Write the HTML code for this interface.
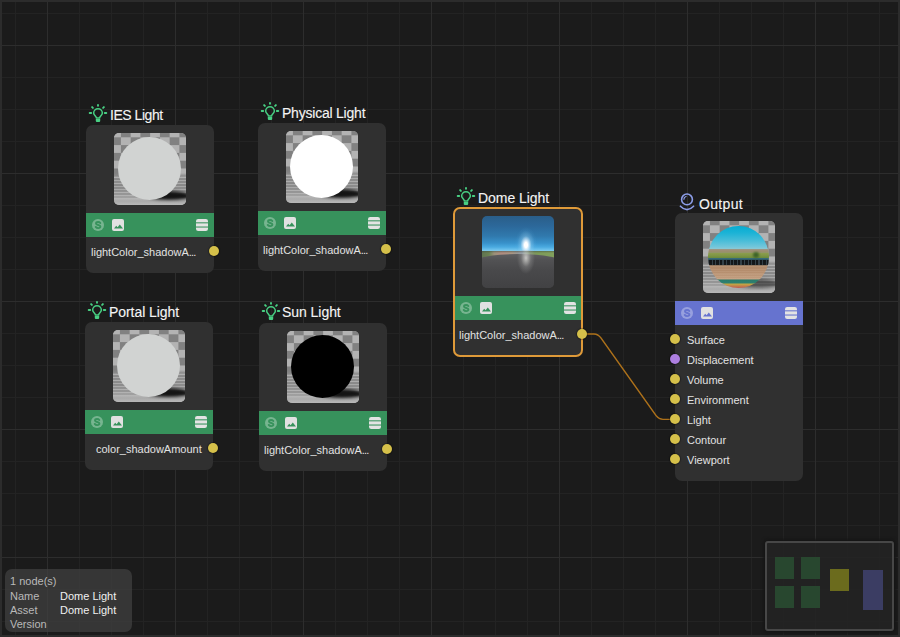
<!DOCTYPE html>
<html><head><meta charset="utf-8">
<style>
*{margin:0;padding:0;box-sizing:border-box}
html,body{width:900px;height:637px;overflow:hidden;background:#1b1b1b}
body{font-family:"Liberation Sans",sans-serif;position:relative}
#cv{position:absolute;left:0;top:0;width:900px;height:637px;
 background-color:#1b1b1b;
 background-image:
  linear-gradient(to right,#2d2d2d 1px,transparent 1px),
  linear-gradient(to bottom,#2d2d2d 1px,transparent 1px),
  linear-gradient(to right,#232323 1px,transparent 1px),
  linear-gradient(to bottom,#232323 1px,transparent 1px);
 background-size:128px 128px,128px 128px,32px 32px,32px 32px;
 background-position:47px 0,0 45px,15px 0,0 13px;
}
#frame{position:absolute;left:0;top:0;width:900px;height:637px;border:2px solid #2c2c2c}
.node{position:absolute;width:128px;height:148px;background:#303030;border-radius:7px}
.thumb{position:absolute;left:28px;top:8px;width:72px;height:72px;border-radius:5px;overflow:hidden;background:#a0a0a0}
.chk{position:absolute;left:0;top:0;width:72px;height:72px;
 background:conic-gradient(#818181 0 25%,#b3b3b3 0 50%,#818181 0 75%,#b3b3b3 0);
 background-size:19.5px 15.6px;background-position:-2.85px -3.5px;filter:blur(0.3px)}
.floor{position:absolute;left:0;top:40px;width:72px;height:32px;
 background:linear-gradient(to bottom,rgba(0,0,0,0) 0,#8a8a8a 3px,#b0b0b0 4.5px,#7c7c7c 6px,#aaaaaa 7.5px,#7e7e7e 9px,#adadad 10.5px,#7a7a7a 12px,#a8a8a8 13.5px,#7e7e7e 15px,#aaaaaa 16.5px,#848484 18px,#b0b0b0 19.5px,#888 21px,#b2b2b2 22.5px,#959595 24px,#b5b5b5 25.5px,#aaa 28px,#b8b8b8 32px)}
.sph{position:absolute;left:4.3px;top:4px;width:63px;height:63px;border-radius:50%}
.shadow{position:absolute;left:34px;top:58px;width:42px;height:9px;border-radius:50% 50% 50% 50%/60% 60% 40% 40%;background:#141414;filter:blur(1.4px)}
.bar{position:absolute;left:0;top:88px;width:128px;height:24px}
.green{background:#37925c}
.blue{background:#6673cf}
.sicon{position:absolute;left:6px;top:6px;width:12px;height:12px}
.iicon{position:absolute;left:26px;top:6px;width:12px;height:12px}
.hicon{position:absolute;right:6px;top:6px;width:12px;height:12px}
.lbl{position:absolute;font-size:11px;color:#e2e2e2;white-space:nowrap;line-height:1}
.dot{position:absolute;width:10px;height:10px;border-radius:50%;background:#d5c04a;box-shadow:0 0 1px 1px rgba(0,0,0,0.3)}
.title{position:absolute;font-size:14px;color:#f4f4f4;-webkit-text-stroke:0.12px #f4f4f4;white-space:nowrap;line-height:1}
.bulb{position:absolute;width:22px;height:22px}
.info{position:absolute;left:5px;top:569px;width:127px;height:63px;border-radius:7px;background:rgba(66,66,66,0.7)}
.info div{position:absolute;font-size:11px;line-height:1;white-space:nowrap}
.mini{position:absolute;left:765px;top:541px;width:129px;height:90px;border:2px solid #474747;border-radius:3px;background:rgba(36,36,36,0.9);box-shadow:0 0 3px 2px #161616}
.mini div{position:absolute}
</style></head>
<body>
<div id="cv"></div>
<div id="frame"></div>

<svg width="0" height="0" style="position:absolute">
 <defs>
  <g id="bulbg" fill="none" stroke="#48d083" stroke-linecap="round">
   <path d="M12 1.9V2.8M6.1 4.1L6.9 4.9M17.9 4.1L17.1 4.9M3.7 10H5.2M20.3 10H18.8" stroke-width="1.9"/>
   <path d="M10.4 15L10.2 14.3C9.6 12.9 7.65 12.1 7.65 10.1A4.35 4.35 0 0 1 16.35 10.1C16.35 12.1 14.4 12.9 13.8 14.3L13.6 15Z" stroke-width="1.5" stroke-linejoin="round"/>
   <path d="M9.8 16.1H14.2V17.9Q14.2 19 13.1 19H10.9Q9.8 19 9.8 17.9Z" fill="#48d083" stroke="none"/>
  </g>
  <g id="sic">
   <path d="M6 0L8.3 .45 10.25 1.75 11.55 3.7 12 6 11.55 8.3 10.25 10.25 8.3 11.55 6 12 3.7 11.55 1.75 10.25 .45 8.3 0 6 .45 3.7 1.75 1.75 3.7 .45Z" fill="rgba(255,255,255,0.32)"/>
   <path d="M8.3 4C7.8 3.3 7 3 6 3C4.8 3 4 3.6 4 4.5C4 6.7 8.4 5.4 8.4 7.6C8.4 8.5 7.5 9.1 6.2 9.1C5.1 9.1 4.3 8.7 3.7 7.9" fill="none" stroke="currentColor" stroke-width="1.9" stroke-linecap="round"/>
  </g>
  <g id="iic">
   <rect x="0" y="0" width="12" height="12" rx="2" fill="#e1e1e1"/>
   <path d="M2 9.6L4.2 6.8 5.6 8.2 7.8 5.6 11 9.6z" fill="currentColor"/>
  </g>
  <g id="hic">
   <rect x="0" y="0" width="12" height="12" rx="2.2" fill="#e3e3e3"/>
   <rect x="0" y="3" width="12" height="1.5" fill="currentColor" opacity="0.7"/>
   <rect x="0" y="7.3" width="12" height="1.5" fill="currentColor" opacity="0.7"/>
  </g>
 </defs>
</svg>

<!-- IES Light -->
<svg class="bulb" style="left:86px;top:103px" viewBox="0 0 22 22"><use href="#bulbg"/></svg>
<div class="title" style="left:110px;top:108px;letter-spacing:-0.46px">IES Light</div>
<div class="node" style="left:86px;top:125px">
 <div class="thumb"><div class="chk"></div><div class="floor"></div><div class="shadow"></div><div class="sph" style="background:#d1d3d2"></div></div>
 <div class="bar green" style="color:#37925c">
  <svg class="sicon" viewBox="0 0 12 12"><use href="#sic"/></svg>
  <svg class="iicon" viewBox="0 0 12 12"><use href="#iic"/></svg>
  <svg class="hicon" viewBox="0 0 12 12"><use href="#hic"/></svg>
 </div>
 <div class="lbl" style="left:5px;top:122px">lightColor_shadowA<span style="letter-spacing:-0.9px">...</span></div>
 <div class="dot" style="left:123px;top:121px"></div>
</div>

<!-- Physical Light -->
<svg class="bulb" style="left:258px;top:101px" viewBox="0 0 22 22"><use href="#bulbg"/></svg>
<div class="title" style="left:282px;top:106px;letter-spacing:-0.22px">Physical Light</div>
<div class="node" style="left:258px;top:123px">
 <div class="thumb"><div class="chk"></div><div class="floor"></div><div class="shadow"></div><div class="sph" style="background:#ffffff"></div></div>
 <div class="bar green" style="color:#37925c">
  <svg class="sicon" viewBox="0 0 12 12"><use href="#sic"/></svg>
  <svg class="iicon" viewBox="0 0 12 12"><use href="#iic"/></svg>
  <svg class="hicon" viewBox="0 0 12 12"><use href="#hic"/></svg>
 </div>
 <div class="lbl" style="left:5px;top:122px">lightColor_shadowA<span style="letter-spacing:-0.9px">...</span></div>
 <div class="dot" style="left:123px;top:121px"></div>
</div>

<!-- Portal Light -->
<svg class="bulb" style="left:85px;top:300px" viewBox="0 0 22 22"><use href="#bulbg"/></svg>
<div class="title" style="left:109px;top:305px;letter-spacing:-0.06px">Portal Light</div>
<div class="node" style="left:85px;top:322px">
 <div class="thumb"><div class="chk"></div><div class="floor"></div><div class="shadow"></div><div class="sph" style="background:#d1d3d2"></div></div>
 <div class="bar green" style="color:#37925c">
  <svg class="sicon" viewBox="0 0 12 12"><use href="#sic"/></svg>
  <svg class="iicon" viewBox="0 0 12 12"><use href="#iic"/></svg>
  <svg class="hicon" viewBox="0 0 12 12"><use href="#hic"/></svg>
 </div>
 <div class="lbl" style="left:11px;top:122px">color_shadowAmount</div>
 <div class="dot" style="left:123px;top:121px"></div>
</div>

<!-- Sun Light -->
<svg class="bulb" style="left:259px;top:301px" viewBox="0 0 22 22"><use href="#bulbg"/></svg>
<div class="title" style="left:282px;top:305px;letter-spacing:-0.05px">Sun Light</div>
<div class="node" style="left:259px;top:323px">
 <div class="thumb"><div class="chk"></div><div class="floor"></div><div class="shadow"></div><div class="sph" style="background:#000"></div></div>
 <div class="bar green" style="color:#37925c">
  <svg class="sicon" viewBox="0 0 12 12"><use href="#sic"/></svg>
  <svg class="iicon" viewBox="0 0 12 12"><use href="#iic"/></svg>
  <svg class="hicon" viewBox="0 0 12 12"><use href="#hic"/></svg>
 </div>
 <div class="lbl" style="left:5px;top:122px">lightColor_shadowA<span style="letter-spacing:-0.9px">...</span></div>
 <div class="dot" style="left:123px;top:121px"></div>
</div>

<!-- wire -->
<svg style="position:absolute;left:0;top:0" width="900" height="637">
 <path d="M582 334 H594 Q598 334 601 338 L656 415.5 Q659 419.3 663 419.3 H675" fill="none" stroke="#ad711a" stroke-width="1.3"/>
</svg>

<!-- Dome Light -->
<svg class="bulb" style="left:454px;top:186px" viewBox="0 0 22 22"><use href="#bulbg"/></svg>
<div class="title" style="left:478px;top:191px;letter-spacing:-0.04px">Dome Light</div>
<div class="node" style="left:454px;top:208px">
 <div class="thumb" style="background:linear-gradient(to bottom,#2a5e89 0,#2c689a 10px,#3079ad 20px,#3891ca 27px,#4aaae0 31px,#70c4ee 34px,#8ec8e0 35.5px,#3d3d3f 40px)">
  <div style="position:absolute;left:0;top:0;width:72px;height:36px;background:radial-gradient(ellipse 11px 18px at 44px 29px,#ffffff 0,#ffffff 14%,rgba(225,242,255,0.85) 26%,rgba(150,210,245,0.38) 50%,rgba(100,180,230,0.1) 80%,rgba(80,160,220,0) 100%)"></div>
  <div style="position:absolute;left:0;top:34.5px;width:72px;height:10px;background:linear-gradient(to bottom,rgba(60,70,60,0.5) 0,rgba(60,70,60,0) 2px),linear-gradient(to right,#5f7450 0,#6a8052 7px,#9a9078 12px,#b08c80 20px,#a89684 30px,#8a96a0 40px,#7e9468 48px,#7c9a58 56px,#82a05c 72px);filter:blur(0.5px)"></div>
  <div style="position:absolute;left:-10px;top:37.5px;width:92px;height:40px;border-radius:50% 50% 0 0/9px 9px 0 0;background:linear-gradient(to bottom,#5e5e60 0,#525254 6px,#49494b 16px,#414143 35px)"></div>
  <div style="position:absolute;left:0;top:34px;width:72px;height:38px;background:radial-gradient(ellipse 9px 16px at 44px 8px,rgba(235,235,230,0.75) 0,rgba(170,170,170,0.3) 55%,rgba(120,120,120,0) 100%)"></div>
 </div>
 <div class="bar green" style="color:#37925c">
  <svg class="sicon" viewBox="0 0 12 12"><use href="#sic"/></svg>
  <svg class="iicon" viewBox="0 0 12 12"><use href="#iic"/></svg>
  <svg class="hicon" viewBox="0 0 12 12"><use href="#hic"/></svg>
 </div>
 <div class="lbl" style="left:5px;top:122px">lightColor_shadowA<span style="letter-spacing:-0.9px">...</span></div>
</div>
<div style="position:absolute;left:453px;top:207px;width:130px;height:150px;border:2px solid #df9a39;border-radius:7px"></div>
<div class="dot" style="left:577px;top:329px"></div>

<!-- Output -->
<svg style="position:absolute;left:678px;top:192px" width="20" height="20" viewBox="0 0 20 20"><g fill="none" stroke="#8c9de8" stroke-linecap="round"><circle cx="9" cy="7.4" r="5.4" stroke-width="1.6"/><path d="M5.9 7.2Q5.9 5.1 8 4.5" stroke-width="1.3"/><path d="M2.4 14.2Q9 21 15.6 14.2" stroke-width="1.6"/></g></svg>
<div class="title" style="left:699px;top:197px;letter-spacing:0.34px">Output</div>
<div class="node" style="left:675px;top:213px;height:268px">
 <div class="thumb"><div class="chk"></div><div class="floor"></div><div class="shadow" style="opacity:0.55"></div>
  <div class="sph" style="left:5px;top:5px;width:61px;height:62px;overflow:hidden;background:linear-gradient(to bottom,#06acd2 0,#1cb3d6 7px,#44bcd8 14px,#74c6da 21px,#86c8d6 22.5px,#9a9888 23px,#a08c70 25px,#94946a 26.5px,#8a9c4c 27.5px,#7c9444 30px,#6a8a3c 32px,#3a6e7c 32.3px,#2e5a66 33.5px,#121618 34px,#161a1c 38.5px,#7a6a5a 39px,#b08a6a 40px,#b68e6e 46px,#c29e80 53px,#2a7c6c 54px,#2e8070 57px,#c4a844 58px,#c05a50 62px)">
   <div style="position:absolute;left:0;top:34px;width:61px;height:5px;background:repeating-linear-gradient(to right,rgba(80,100,110,0.55) 0 1.2px,transparent 1.2px 3.6px)"></div>
   <div style="position:absolute;left:45px;top:26px;width:6px;height:6px;border-radius:50%;background:#3e6428;filter:blur(0.8px)"></div>
   <div style="position:absolute;left:0;top:40px;width:61px;height:14px;background:repeating-linear-gradient(to bottom,rgba(255,240,220,0.08) 0 1px,transparent 1px 2.5px)"></div>
  </div>
 </div>
 <div class="bar blue" style="color:#6673cf">
  <svg class="sicon" viewBox="0 0 12 12"><use href="#sic"/></svg>
  <svg class="iicon" viewBox="0 0 12 12"><use href="#iic"/></svg>
  <svg class="hicon" viewBox="0 0 12 12"><use href="#hic"/></svg>
 </div>
 <div class="lbl" style="left:12px;top:122px">Surface</div>
 <div class="lbl" style="left:12px;top:142px">Displacement</div>
 <div class="lbl" style="left:12px;top:162px">Volume</div>
 <div class="lbl" style="left:12px;top:182px">Environment</div>
 <div class="lbl" style="left:12px;top:202px">Light</div>
 <div class="lbl" style="left:12px;top:222px">Contour</div>
 <div class="lbl" style="left:12px;top:242px">Viewport</div>
 <div class="dot" style="left:-5.4px;top:121.4px"></div>
 <div class="dot" style="left:-5.4px;top:141.4px;background:#ad7fe0"></div>
 <div class="dot" style="left:-5.4px;top:161.4px"></div>
 <div class="dot" style="left:-5.4px;top:181.4px"></div>
 <div class="dot" style="left:-5.4px;top:201.4px"></div>
 <div class="dot" style="left:-5.4px;top:221.4px"></div>
 <div class="dot" style="left:-5.4px;top:241.4px"></div>
</div>

<!-- info -->
<div class="info">
 <div style="left:5px;top:7px;color:#b9b9b9">1 node(s)</div>
 <div style="left:5px;top:22px;color:#b9b9b9">Name</div>
 <div style="left:55px;top:22px;color:#f0f0f0">Dome Light</div>
 <div style="left:5px;top:36px;color:#b9b9b9">Asset</div>
 <div style="left:55px;top:36px;color:#f0f0f0">Dome Light</div>
 <div style="left:5px;top:50px;color:#b9b9b9">Version</div>
</div>

<!-- minimap -->
<div class="mini">
 <div style="left:8px;top:14px;width:19px;height:22px;background:#28472f"></div>
 <div style="left:34px;top:14px;width:19px;height:22px;background:#28472f"></div>
 <div style="left:8px;top:43px;width:19px;height:22px;background:#28472f"></div>
 <div style="left:34px;top:43px;width:19px;height:22px;background:#28472f"></div>
 <div style="left:63px;top:26px;width:19px;height:22px;background:#6b6b1d"></div>
 <div style="left:96px;top:27px;width:19.5px;height:40px;background:#3b3d63"></div>
</div>
</body></html>
